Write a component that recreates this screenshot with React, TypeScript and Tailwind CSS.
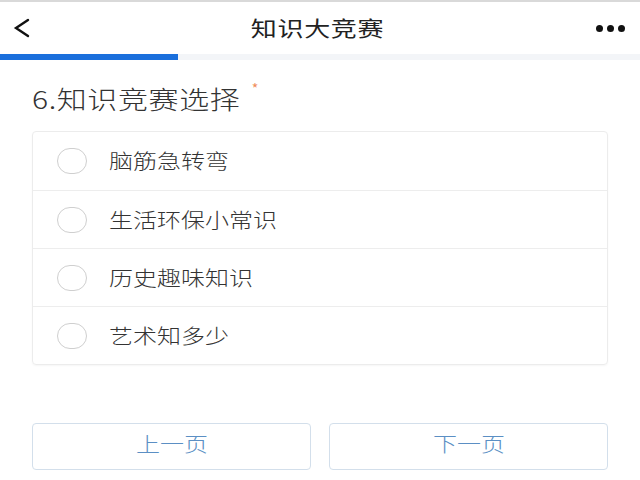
const options = ["脑筋急转弯", "生活环保小常识", "历史趣味知识", "艺术知多少"];

export default function App() {
  return (
    <div
      className="flex h-[480px] w-[640px] flex-col overflow-hidden bg-white text-[#333]"
      style={{ fontFamily: '"Noto Sans CJK SC", "Noto Sans", sans-serif' }}
    >
      <div className="h-[2px] bg-[#d9d9d9]" />
      <header className="flex h-[52px] items-center justify-between px-[13px]">
        <svg width="18" height="20" viewBox="0 0 18 20" fill="none" stroke="#111" strokeWidth="2.4" strokeLinecap="round">
          <path d="M15 2 L3 10 L15 18" />
        </svg>
        <h1 className="inline-block origin-center scale-x-[1.24] pl-[6px] text-[21px] tracking-[0.5px] text-[#222]">知识大竞赛</h1>
        <div className="flex gap-[4px] pr-[2px]">
          <span className="h-[7px] w-[7px] rounded-full bg-[#111]" />
          <span className="h-[7px] w-[7px] rounded-full bg-[#111]" />
          <span className="h-[7px] w-[7px] rounded-full bg-[#111]" />
        </div>
      </header>
      <div className="flex h-[6px] bg-[#f3f5f8]">
        <div className="w-[178px] bg-[#1a6fdc]" />
      </div>
      <main className="flex flex-1 flex-col px-[32px]">
        <div className="mt-[22px] flex items-start">
          <h2 className="inline-block origin-left scale-x-[1.2] text-[25px] font-light leading-[32px] tracking-[0.5px] text-[#333]">6.知识竞赛选择</h2>
          <span className="ml-[46px] mt-[-4px] text-[14px] text-[#f08c5a]">*</span>
        </div>
        <div className="mt-[17px] rounded-[4px] border border-[#ececec] shadow-[0_1px_2px_rgba(0,0,0,0.04)]">
          {options.map((o, i) => (
            <div
              key={o}
              className={`flex h-[58px] items-center pl-[24px] ${i > 0 ? "border-t border-[#ededed]" : ""}`}
            >
              <span className="h-[26px] w-[30px] rounded-full border border-[#cfcfcf]" />
              <span className="ml-[22px] inline-block origin-left scale-x-[1.2] text-[20px] font-light text-[#333]">{o}</span>
            </div>
          ))}
        </div>
        <div className="mt-[58px] flex gap-[18px]">
          <button className="h-[47px] flex-1 rounded-[4px] border border-[#d3dfeb] pb-[5px] text-[#5b8fc4]">
            <span className="inline-block scale-x-[1.2] text-[20px] font-light">上一页</span>
          </button>
          <button className="h-[47px] flex-1 rounded-[4px] border border-[#d3dfeb] pb-[5px] text-[#5b8fc4]">
            <span className="inline-block scale-x-[1.2] text-[20px] font-light">下一页</span>
          </button>
        </div>
      </main>
    </div>
  );
}
